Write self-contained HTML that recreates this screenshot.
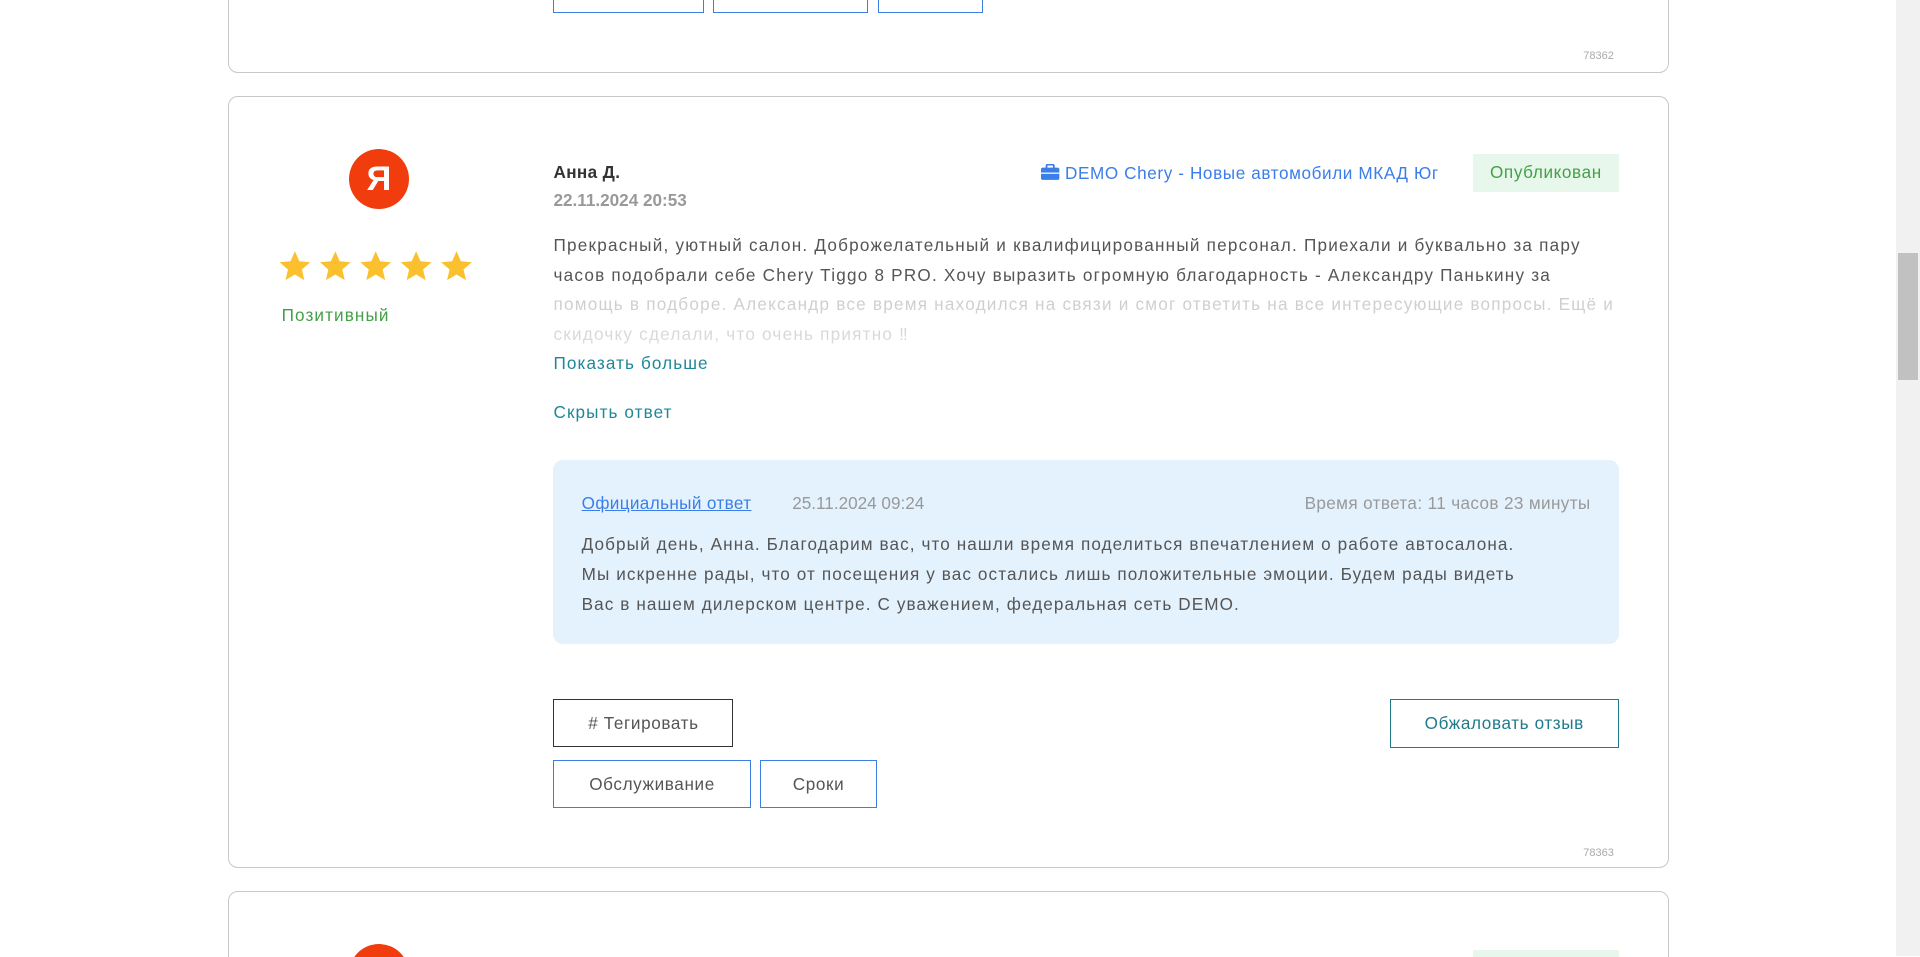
<!DOCTYPE html>
<html><head><meta charset="utf-8"><style>
html,body{margin:0;padding:0;background:#fff;overflow:hidden}
body{zoom:1.2244898;width:1568px;height:781px;position:relative;font-family:"Liberation Sans",sans-serif;color:#555;letter-spacing:0.9px;overflow:hidden}
.a{position:absolute;white-space:nowrap}
.card{position:absolute;left:186px;width:1175px;border:1px solid #c8c8c8;border-radius:8px;background:#fff}
.btn{position:absolute;box-sizing:border-box;border:1px solid #3d7fe0;font-size:14px;display:flex;align-items:center;justify-content:center;color:#555;letter-spacing:0.5px}
.num{font-size:9px;color:#aaa;letter-spacing:0}
</style></head><body>
<div class="card" style="top:-20px;height:78px"></div>
<div class="btn" style="left:452px;top:-20px;width:123px;height:31px"></div>
<div class="btn" style="left:582px;top:-20px;width:127px;height:31px"></div>
<div class="btn" style="left:717px;top:-20px;width:86px;height:31px"></div>
<div class="a num" style="left:1293px;top:41px">78362</div>

<div class="card" style="top:78px;height:629px"></div>
<div class="a" style="left:285px;top:122px;width:49px;height:49px;border-radius:50%;background:#f13d0e;color:#fff;font-size:28px;font-weight:bold;text-align:center;line-height:49px;letter-spacing:0">Я</div>
<div class="a" style="left:228px;top:204px">
<svg width="162" height="28" viewBox="0 0 162 28"><g fill="#fbc02d">
<path id="s" d="M13 1l3.6 8.2 8.9.8-6.8 5.9 2 8.7L13 20l-7.7 4.6 2-8.7L.5 10l8.9-.8z"/>
<use href="#s" x="33"/><use href="#s" x="66"/><use href="#s" x="99"/><use href="#s" x="132"/></g></svg></div>
<div class="a" style="left:230px;top:249px;font-size:14px;color:#43a047">Позитивный</div>

<div class="a" style="left:452px;top:132px;font-size:14px;font-weight:bold;color:#333;letter-spacing:0.3px">Анна Д.</div>
<div class="a" style="left:452px;top:155px;font-size:14px;font-weight:bold;color:#999;letter-spacing:0">22.11.2024 20:53</div>
<div class="a" style="right:393px;top:133px;font-size:14px;color:#3b7de9;letter-spacing:0.5px">
<svg width="15" height="13" viewBox="0 0 15 13" style="vertical-align:-1px"><rect x="0" y="3" width="15" height="10" rx="1.5" fill="#3b7de9"/><rect x="4.5" y="0.5" width="6" height="4" rx="1" fill="none" stroke="#3b7de9" stroke-width="1.5"/><rect x="0" y="7" width="15" height="1" fill="#fff"/></svg>
DEMO Chery - Новые автомобили МКАД Юг</div>
<div class="a" style="left:1203px;top:126px;width:119px;height:31px;background:#e8f7ec;color:#43a047;font-size:14px;text-align:center;line-height:31px;letter-spacing:0.5px">Опубликован</div>

<div class="a" style="left:452px;top:189px;font-size:14px;line-height:24px;height:96px;overflow:hidden;letter-spacing:1px;-webkit-mask-image:linear-gradient(#000 48px,rgba(0,0,0,.3) 52px,rgba(0,0,0,.2) 96px)">Прекрасный, уютный салон. Доброжелательный и квалифицированный персонал. Приехали и буквально за пару<br>часов подобрали себе Chery Tiggo 8 PRO. Хочу выразить огромную благодарность - Александру Панькину за<br>помощь в подборе. Александр все время находился на связи и смог ответить на все интересующие вопросы. Ещё и<br>скидочку сделали, что очень приятно ‼</div>
<div class="a" style="left:452px;top:288px;font-size:14px;color:#1f8799">Показать больше</div>
<div class="a" style="left:452px;top:328px;font-size:14px;color:#1f8799">Скрыть ответ</div>

<div class="a" style="left:452px;top:376px;width:870px;height:150px;background:#e4f2fd;border-radius:8px"></div>
<div class="a" style="left:475px;top:403px;font-size:14px;color:#3b7de9;text-decoration:underline;letter-spacing:0.3px">Официальный ответ</div>
<div class="a" style="left:647px;top:403px;font-size:14px;color:#999;letter-spacing:0">25.11.2024 09:24</div>
<div class="a" style="right:269px;top:403px;font-size:14px;color:#999;letter-spacing:0.3px">Время ответа: 11 часов 23 минуты</div>
<div class="a" style="left:475px;top:432px;font-size:14px;line-height:24.5px;color:#555">Добрый день, Анна. Благодарим вас, что нашли время поделиться впечатлением о работе автосалона.<br>Мы искренне рады, что от посещения у вас остались лишь положительные эмоции. Будем рады видеть<br>Вас в нашем дилерском центре. С уважением, федеральная сеть DEMO.</div>

<div class="btn" style="left:452px;top:571px;width:147px;height:39px;border-color:#333">#&nbsp;Тегировать</div>
<div class="btn" style="left:1135px;top:571px;width:187px;height:40px;border-color:#1f7a8c;color:#1f7a8c">Обжаловать отзыв</div>
<div class="btn" style="left:452px;top:621px;width:161px;height:39px">Обслуживание</div>
<div class="btn" style="left:621px;top:621px;width:95px;height:39px">Сроки</div>
<div class="a num" style="left:1293px;top:692px">78363</div>

<div class="card" style="top:728px;height:100px"></div>
<div class="a" style="left:285px;top:771px;width:49px;height:49px;border-radius:50%;background:#f13d0e"></div>
<div class="a" style="left:1203px;top:776px;width:119px;height:31px;background:#e8f7ec"></div>

<div class="a" style="left:1548px;top:0;width:20px;height:781px;background:#f1f1f1"></div>
<div class="a" style="left:1550px;top:207px;width:16px;height:103px;background:#c1c1c1"></div>
</body></html>
